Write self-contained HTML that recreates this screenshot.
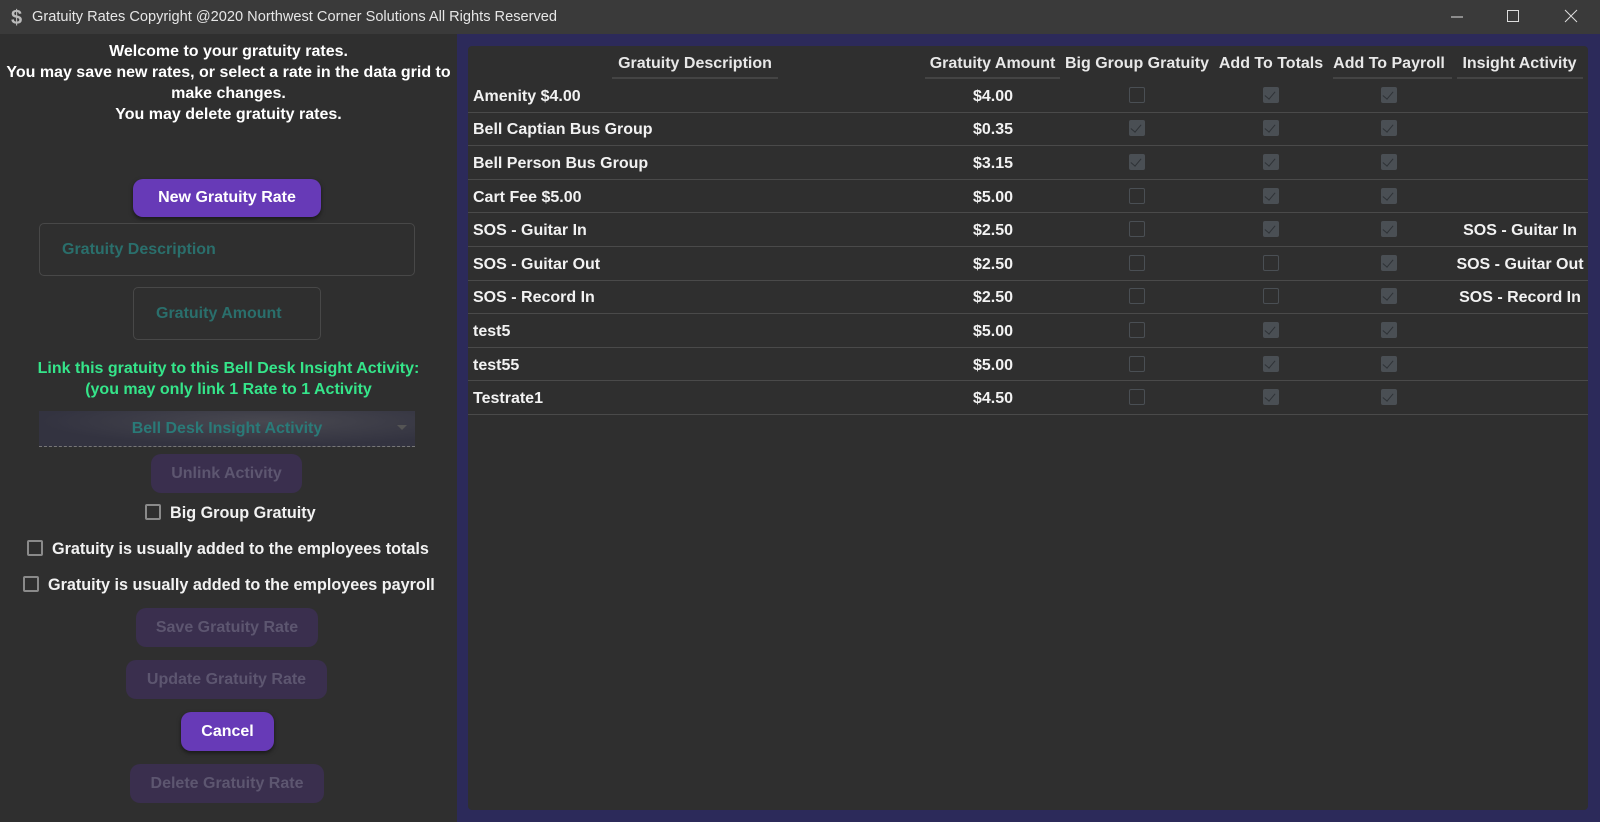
<!DOCTYPE html>
<html><head><meta charset="utf-8"><style>
*{box-sizing:border-box;margin:0;padding:0}
body{width:1600px;height:822px;background:#2f2f2f;font-family:"Liberation Sans",Arial,sans-serif;position:relative;overflow:hidden;color:#fff}
.abs{position:absolute}
.title{left:0;top:0;width:1600px;height:34px;background:#3a3a3a}
.title span{position:absolute;left:32px;top:9px;font-size:14.6px;color:#e6e6e6}
.c{text-align:center;font-weight:bold}
.btn{position:absolute;border-radius:10px;font-weight:bold;font-size:16px;display:flex;align-items:center;justify-content:center}
.on{background:#673ab7;color:#fff;box-shadow:0 2px 4px rgba(0,0,0,.5)}
.off{background:#3a2f4e;color:#5d5670}
.field{position:absolute;border:1px solid #484848;border-radius:5px;color:#2a6f6c;font-weight:bold;font-size:16px}
.cb{position:absolute;width:16px;height:16px;border:2px solid #8a8a8a;border-radius:2px}
.lbl{position:absolute;font-weight:bold;font-size:16.2px;color:#f2f2f2}
.gc{position:absolute;width:16px;height:16px;border-radius:2px}
.gc.u{border:1.5px solid #4a4f54}
.gc.k{background:#4a4f54}
.gc.k::after{content:"";position:absolute;left:4px;top:2px;width:5px;height:9px;border-right:1.5px solid #2e3236;border-bottom:1.5px solid #2e3236;transform:rotate(40deg)}
.row{position:absolute;left:468px;width:1120px;height:1px;background:#4a4a4a}
.t{position:absolute;font-weight:bold;font-size:16px;color:#f2f2f2;white-space:nowrap}
.hd{position:absolute;top:55px;font-weight:bold;font-size:16px;color:#e8e8e8;white-space:nowrap;text-align:center}
.ul{position:absolute;top:77px;height:2px;background:#444}
</style></head><body>
<div class="abs title"><svg class="abs" style="left:9px;top:6px" width="16" height="22" viewBox="0 0 16 22"><text x="2" y="18" font-size="20" font-weight="bold" fill="#bbb" font-family="Liberation Sans">$</text></svg><span>Gratuity Rates Copyright @2020 Northwest Corner Solutions All Rights Reserved</span>
<svg class="abs" style="left:1450px;top:10px" width="14" height="14"><line x1="1" y1="7" x2="13" y2="7" stroke="#ddd" stroke-width="1"/></svg>
<svg class="abs" style="left:1506px;top:9px" width="14" height="14"><rect x="1.5" y="1.5" width="11" height="11" fill="none" stroke="#ddd" stroke-width="1"/></svg>
<svg class="abs" style="left:1564px;top:9px" width="14" height="14"><path d="M1 1L13 13M13 1L1 13" stroke="#ddd" stroke-width="1"/></svg>
</div>

<div class="abs c" style="left:0;top:41px;width:457px;font-size:16px;line-height:21px">Welcome to your gratuity rates.<br>You may save new rates, or select a rate in the data grid to<br>make changes.<br>You may delete gratuity rates.</div>

<div class="btn on" style="left:133px;top:179px;width:188px;height:38px">New Gratuity Rate</div>
<div class="field" style="left:39px;top:223px;width:376px;height:53px;padding:17px 0 0 22px">Gratuity Description</div>
<div class="field" style="left:133px;top:287px;width:188px;height:53px;padding:17px 0 0 22px">Gratuity Amount</div>
<div class="abs c" style="left:0;top:358px;width:457px;font-size:16px;line-height:21px;color:#35e58a">Link this gratuity to this Bell Desk Insight Activity:<br>(you may only link 1 Rate to 1 Activity</div>
<div class="abs" style="left:39px;top:411px;width:376px;height:36px;background:radial-gradient(ellipse at 60% 30%,#484850,#333340 70%);border-bottom:1.5px dashed #777;color:#2a7a78;font-weight:bold;font-size:16px;text-align:center;line-height:36px">Bell Desk Insight Activity<span style="position:absolute;right:8px;top:14px;width:0;height:0;border-left:5px solid transparent;border-right:5px solid transparent;border-top:5px solid #555"></span></div>
<div class="btn off" style="left:151px;top:454px;width:151px;height:39px">Unlink Activity</div>
<div class="cb" style="left:145px;top:504px"></div><div class="lbl" style="left:170px;top:504px">Big Group Gratuity</div>
<div class="cb" style="left:27px;top:540px"></div><div class="lbl" style="left:52px;top:540px">Gratuity is usually added to the employees totals</div>
<div class="cb" style="left:23px;top:576px"></div><div class="lbl" style="left:48px;top:576px">Gratuity is usually added to the employees payroll</div>
<div class="btn off" style="left:136px;top:608px;width:182px;height:39px">Save Gratuity Rate</div>
<div class="btn off" style="left:126px;top:660px;width:201px;height:39px">Update Gratuity Rate</div>
<div class="btn on" style="left:181px;top:712px;width:93px;height:39px">Cancel</div>
<div class="btn off" style="left:130px;top:764px;width:194px;height:39px">Delete Gratuity Rate</div>

<div class="abs" style="left:457px;top:34px;width:1143px;height:788px;background:#2c2a5a"></div>
<div class="abs" style="left:468px;top:46px;width:1120px;height:764px;background:#2f2f2f;border-radius:4px"></div>

<div class="hd" style="left:612px;width:166px">Gratuity Description</div><div class="ul" style="left:612px;width:166px"></div>
<div class="hd" style="left:925px;width:135px">Gratuity Amount</div><div class="ul" style="left:925px;width:135px"></div>
<div class="hd" style="left:1064px;width:146px">Big Group Gratuity</div>
<div class="hd" style="left:1217px;width:108px">Add To Totals</div>
<div class="hd" style="left:1333px;width:112px">Add To Payroll</div><div class="ul" style="left:1333px;width:119px"></div>
<div class="hd" style="left:1457px;width:125px">Insight Activity</div><div class="ul" style="left:1457px;width:126px"></div>

<div id="g"></div>
<script>
var rows=[["Amenity $4.00","$4.00",0,1,1,""],["Bell Captian Bus Group","$0.35",1,1,1,""],["Bell Person Bus Group","$3.15",1,1,1,""],["Cart Fee $5.00","$5.00",0,1,1,""],["SOS - Guitar In","$2.50",0,1,1,"SOS - Guitar In"],["SOS - Guitar Out","$2.50",0,0,1,"SOS - Guitar Out"],["SOS - Record In","$2.50",0,0,1,"SOS - Record In"],["test5","$5.00",0,1,1,""],["test55","$5.00",0,1,1,""],["Testrate1","$4.50",0,1,1,""]];
var h="",y0=79,rh=33.6;
rows.forEach(function(r,i){var y=y0+i*rh;var cy=y+rh/2;
h+='<div class="t" style="left:473px;top:'+(cy-8)+'px">'+r[0]+'</div>';
h+='<div class="t" style="left:943px;width:100px;text-align:center;top:'+(cy-8)+'px">'+r[1]+'</div>';
[[1137,r[2]],[1271,r[3]],[1389,r[4]]].forEach(function(c){h+='<div class="gc '+(c[1]?'k':'u')+'" style="left:'+(c[0]-8)+'px;top:'+(cy-9)+'px"></div>';});
if(r[5])h+='<div class="t" style="left:1452px;width:136px;text-align:center;top:'+(cy-8)+'px">'+r[5]+'</div>';
h+='<div class="row" style="top:'+Math.round(y+rh-1)+'px"></div>';});
document.getElementById("g").innerHTML=h;
</script>
</body></html>
